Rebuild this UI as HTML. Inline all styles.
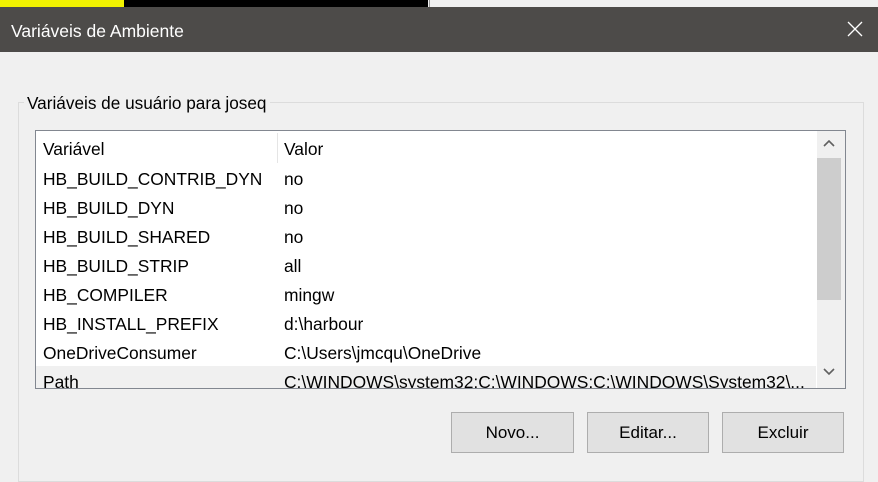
<!DOCTYPE html>
<html><head><style>
*{margin:0;padding:0;box-sizing:border-box}
body{width:878px;height:473px;overflow:hidden;background:#f0f0f0;font-family:"Liberation Sans",sans-serif;font-size:17.4px;color:#000;position:relative}
.a{position:absolute}
.t{position:absolute;white-space:nowrap;line-height:20px}
.btn{position:absolute;top:412px;height:41px;background:#e1e1e1;border:1px solid #adadad;text-align:center;line-height:39px;font-size:17px}
</style></head><body>
<div class="a" style="left:0;top:0;width:124px;height:7px;background:#f2f200"></div>
<div class="a" style="left:124px;top:0;width:304px;height:7px;background:#000"></div>
<div class="a" style="left:428px;top:0;width:450px;height:7px;background:#f0f0f0"></div>
<div class="a" style="left:429px;top:0;width:1px;height:7px;background:#999"></div>
<div class="a" style="left:0;top:7px;width:878px;height:45px;background:#4d4b49"></div>
<div class="t" style="left:11px;top:21px;color:#fff;font-size:17.5px">Variáveis de Ambiente</div>
<svg class="a" style="left:847px;top:21px" width="16" height="16"><path d="M1 1L15 15M15 1L1 15" stroke="#fff" stroke-width="1.3"/></svg>
<div class="a" style="left:18px;top:102px;width:846px;height:380px;border:1px solid #dcdcdc"></div>
<div class="t" style="left:24px;top:93px;background:#f0f0f0;padding:0 3px;font-size:17.2px">Variáveis de usuário para joseq</div>
<div class="a" style="left:35px;top:130px;width:811px;height:259px;background:#fff;border:1px solid #828790;overflow:hidden">
<div class="a" style="left:0;top:235px;width:780px;height:24px;background:#f0f0f0"></div>
<div class="a" style="left:241px;top:2px;width:1px;height:30px;background:#e5e5e5"></div>
<div class="a" style="left:781px;top:0;width:28px;height:258px;background:#f0f0f0"></div>
<div class="a" style="left:781px;top:27px;width:24px;height:142px;background:#cdcdcd"></div>
<svg class="a" style="left:787px;top:9px" width="12" height="8"><path d="M1 6L6 1L11 6" stroke="#606060" stroke-width="1.6" fill="none"/></svg>
<svg class="a" style="left:787px;top:237px" width="12" height="8"><path d="M1 1L6 6L11 1" stroke="#606060" stroke-width="1.6" fill="none"/></svg>
</div>
<div class="t" style="left:43px;top:139px">Variável</div><div class="t" style="left:284px;top:139px">Valor</div>
<div class="t" style="left:43px;top:169px">HB_BUILD_CONTRIB_DYN</div><div class="t" style="left:284px;top:169px">no</div>
<div class="t" style="left:43px;top:198px">HB_BUILD_DYN</div><div class="t" style="left:284px;top:198px">no</div>
<div class="t" style="left:43px;top:227px">HB_BUILD_SHARED</div><div class="t" style="left:284px;top:227px">no</div>
<div class="t" style="left:43px;top:256px">HB_BUILD_STRIP</div><div class="t" style="left:284px;top:256px">all</div>
<div class="t" style="left:43px;top:285px">HB_COMPILER</div><div class="t" style="left:284px;top:285px">mingw</div>
<div class="t" style="left:43px;top:314px">HB_INSTALL_PREFIX</div><div class="t" style="left:284px;top:314px">d:\harbour</div>
<div class="t" style="left:43px;top:343px">OneDriveConsumer</div><div class="t" style="left:284px;top:343px">C:\Users\jmcqu\OneDrive</div>
<div class="a" style="left:36px;top:366px;width:780px;height:22px;overflow:hidden">
<div class="t" style="left:7px;top:6px">Path</div><div class="t" style="left:248px;top:6px">C:\WINDOWS\system32;C:\WINDOWS;C:\WINDOWS\System32\...</div></div>
<div class="btn" style="left:451px;width:123px">Novo...</div>
<div class="btn" style="left:587px;width:122px">Editar...</div>
<div class="btn" style="left:722px;width:122px">Excluir</div>
</body></html>
